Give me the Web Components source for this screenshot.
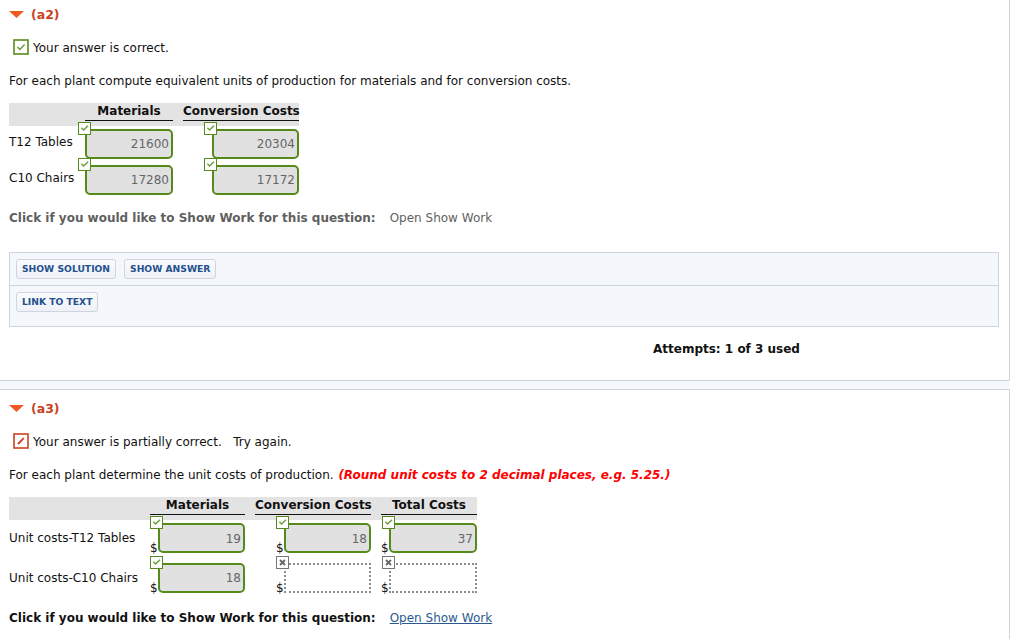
<!DOCTYPE html>
<html>
<head>
<meta charset="utf-8">
<title>Question</title>
<style>
  html, body { margin: 0; padding: 0; background: #fff; overflow: hidden; }
  body { height: 639px; font: 12px/18px "DejaVu Sans", Verdana, sans-serif; color: #111; }
</style>
</head>
<body>
<quiz-part label="(a2)" class="first">
  <answer-status kind="correct">Your answer is correct.</answer-status>
  <p-line>For each plant compute equivalent units of production for materials and for conversion costs.</p-line>
  <answer-grid columns="66px 88px 116px" rows="36px" style="--label-top:4px;--value-top:4px">
    <grid-head></grid-head><grid-head line>Materials</grid-head><grid-head line>Conversion Costs</grid-head>
    <row-label>T12 Tables</row-label><answer-cell value="21600"></answer-cell><answer-cell value="20304" wide></answer-cell>
    <row-label>C10 Chairs</row-label><answer-cell value="17280"></answer-cell><answer-cell value="17172" wide></answer-cell>
  </answer-grid>
  <show-work muted style="margin-top:8px"></show-work>
  <help-panel></help-panel>
  <attempts-line>Attempts: 1 of 3 used</attempts-line>
</quiz-part>
<part-gap></part-gap>
<quiz-part label="(a3)" class="second">
  <answer-status kind="partial">Your answer is partially correct.&nbsp;&nbsp; Try again.</answer-status>
  <p-line>For each plant determine the unit costs of production. <b>(Round unit costs to 2 decimal places, e.g. 5.25.)</b></p-line>
  <answer-grid columns="131px 95px 116px 96px" rows="40px" style="--label-top:6px;--value-top:5px">
    <grid-head></grid-head><grid-head line>Materials</grid-head><grid-head line>Conversion Costs</grid-head><grid-head line>Total Costs</grid-head>
    <row-label>Unit costs-T12 Tables</row-label><answer-cell dollar value="19"></answer-cell><answer-cell dollar wide value="18"></answer-cell><answer-cell dollar mark-left="1" value="37"></answer-cell>
    <row-label>Unit costs-C10 Chairs</row-label><answer-cell dollar value="18" style="--value-top:4px"></answer-cell><answer-cell dollar wide empty></answer-cell><answer-cell dollar mark-left="1" empty></answer-cell>
  </answer-grid>
  <show-work style="margin-top:6px"></show-work>
</quiz-part>

<script>
const CHECK = `<svg viewBox="0 0 13 13" width="13" height="13"><rect x=".5" y=".5" width="12" height="12" fill="#fff" stroke="#578a1c"/><path d="M3.4 5.8 5.6 8 10 3.8" fill="none" stroke="#6f9c3c" stroke-width="1.4"/></svg>`;
const CROSS = `<svg viewBox="0 0 13 13" width="13" height="13"><rect x=".5" y=".5" width="12" height="12" fill="#fff" stroke="#777"/><path d="M4 4 9 9M9 4 4 9" fill="none" stroke="#666" stroke-width="1.8"/></svg>`;

function simple(name, css, html = "<slot></slot>") {
  customElements.define(name, class extends HTMLElement {
    constructor() {
      super();
      this.attachShadow({ mode: "open" }).innerHTML = `<style>${css}</style>${html}`;
    }
  });
}

class QuizPart extends HTMLElement {
  connectedCallback() {
    this.attachShadow({ mode: "open" }).innerHTML = `
      <style>
        :host {
          display: block;
          box-sizing: border-box;
          width: 1010px;
          border: 1px solid #cdd5e3;
          border-left: 0;
          padding: 10px 0 0 9px;
        }
        :host(.first) { border-top: 0; height: 381px; padding-top: 6px; }
        :host(.second) { border-bottom: 0; height: 250px; }
        .head {
          display: flex;
          align-items: flex-start;
          gap: 7px;
          height: 16px;
          color: #c9421f;
          font-weight: bold;
          font-size: 12.5px;
        }
        svg { display: block; margin-top: 5px; }
      </style>
      <div class="head">
        <svg width="15" height="7" viewBox="0 0 15 7"><path d="M0 0H15L7.5 7Z" fill="#f05a22"/></svg>
        <span>${this.getAttribute("label")}</span>
      </div>
      <slot></slot>`;
  }
}
customElements.define("quiz-part", QuizPart);

simple("part-gap", `
  :host { display: block; width: 1009px; height: 8px; background: #f4f7fb; }
`);

class AnswerStatus extends HTMLElement {
  connectedCallback() {
    const ok = this.getAttribute("kind") === "correct";
    const icon = ok
      ? `<rect x="1" y="1" width="14" height="14" fill="#fff" stroke="#578a1c" stroke-width="1.6"/><path d="M4.4 8 6.9 10.4 11.6 5.6" fill="none" stroke="#6f9c3c" stroke-width="1.5"/>`
      : `<rect x="1" y="1" width="14" height="14" fill="#fff" stroke="#cc4125" stroke-width="1.6"/><path d="M5 11 10.8 5.2" fill="none" stroke="#cc4125" stroke-width="1.9"/>`;
    this.attachShadow({ mode: "open" }).innerHTML = `
      <style>
        :host { display: flex; align-items: flex-start; gap: 4px; margin: 17px 0 0 4px; height: 16px; white-space: nowrap; }
        svg { display: block; flex: none; }
      </style>
      <svg width="16" height="16" viewBox="0 0 16 16">${icon}</svg>
      <span><slot></slot></span>`;
  }
}
customElements.define("answer-status", AnswerStatus);

simple("p-line", `
  :host { display: block; margin-top: 18px; height: 16px; line-height: 16px; }
  ::slotted(b) { color: #f00; font-style: italic; margin-left: 1px; }
`);

class AnswerGrid extends HTMLElement {
  connectedCallback() {
    this.attachShadow({ mode: "open" }).innerHTML = `
      <style>
        :host { display: block; margin-top: 14px; }
        .grid {
          display: grid;
          width: max-content;
          grid-template-columns: ${this.getAttribute("columns")};
          column-gap: 10px;
          grid-template-rows: 26px;
          grid-auto-rows: ${this.getAttribute("rows")};
          background: linear-gradient(#e3e3e3, #e3e3e3) top / 100% 23px no-repeat;
        }
      </style>
      <div class="grid"><slot></slot></div>`;
  }
}
customElements.define("answer-grid", AnswerGrid);

class GridHead extends HTMLElement {
  connectedCallback() {
    const line = this.hasAttribute("line");
    this.attachShadow({ mode: "open" }).innerHTML = `
      <style>
        :host { display: block; text-align: center; font-weight: bold; white-space: nowrap; }
        span { display: block; height: 17px; line-height: 16px; ${line ? "border-bottom: 1px solid #111;" : ""} }
      </style>
      <span><slot></slot></span>`;
  }
}
customElements.define("grid-head", GridHead);

simple("row-label", `
  :host { display: block; padding-top: var(--label-top, 4px); white-space: nowrap; }
`);

class AnswerCell extends HTMLElement {
  connectedCallback() {
    const empty = this.hasAttribute("empty");
    const dollar = this.hasAttribute("dollar");
    const wide = this.hasAttribute("wide");
    const inset = wide ? (dollar ? 21 : 29) : 0;
    const markLeft = this.getAttribute("mark-left") || (wide ? 21 : (dollar ? 0 : -7));
    this.attachShadow({ mode: "open" }).innerHTML = `
      <style>
        :host { display: flex; align-items: flex-start; position: relative; height: 30px; padding-left: ${inset}px; }
        .dollar { width: 8px; flex: none; line-height: 14px; margin-top: 18px; overflow: hidden; color: #111; }
        .box {
          flex: 1;
          box-sizing: border-box;
          height: 30px;
          text-align: right;
          padding: var(--value-top, 4px) 2px 0 0;
          color: #666;
          ${empty
            ? "border: 2px dotted #8c8c8c; background: #fff;"
            : "border: 2px solid #578a1c; background: #e1e1e1; border-radius: 5px;"}
        }
        .mark { position: absolute; top: -7px; left: ${markLeft}px; width: 13px; height: 13px; }
        svg { display: block; }
      </style>
      ${dollar ? `<span class="dollar">$</span>` : ""}
      <div class="box">${this.getAttribute("value") || ""}</div>
      <div class="mark">${empty ? CROSS : CHECK}</div>`;
  }
}
customElements.define("answer-cell", AnswerCell);

class ShowWork extends HTMLElement {
  connectedCallback() {
    const muted = this.hasAttribute("muted");
    this.attachShadow({ mode: "open" }).innerHTML = `
      <style>
        :host { display: flex; gap: 14px; height: 16px; color: ${muted ? "#5f5f5f" : "#111"}; white-space: nowrap; }
        a { color: ${muted ? "#5f5f5f" : "#2a5a8f"}; text-decoration: ${muted ? "none" : "underline"}; }
      </style>
      <b>Click if you would like to Show Work for this question:</b>
      <a>Open Show Work</a>`;
  }
}
customElements.define("show-work", ShowWork);

class HelpPanel extends HTMLElement {
  connectedCallback() {
    this.attachShadow({ mode: "open" }).innerHTML = `
      <style>
        :host {
          display: block;
          box-sizing: border-box;
          width: 990px;
          height: 75px;
          margin-top: 27px;
          background: #f4f7fb;
          border: 1px solid #cdd5e3;
        }
        .row { display: flex; gap: 8px; height: 32px; padding: 6px 6px 0; box-sizing: border-box; }
        .row + .row { border-top: 1px solid #cdd5e3; height: 41px; }
      </style>
      <div class="row"><help-button>SHOW SOLUTION</help-button><help-button>SHOW ANSWER</help-button></div>
      <div class="row"><help-button>LINK TO TEXT</help-button></div>`;
  }
}
customElements.define("help-panel", HelpPanel);

simple("help-button", `
  :host {
    display: block;
    box-sizing: border-box;
    height: 20px;
    padding: 0 5px;
    border: 1px solid #cdd5e3;
    border-radius: 3px;
    background: linear-gradient(#fafbfd, #eef1f6);
    color: #24508f;
    font-weight: bold;
    font-size: 9.2px;
    line-height: 18px;
    white-space: nowrap;
  }
`);

simple("attempts-line", `
  :host { display: block; margin: 13px 0 0 644px; height: 16px; font-weight: bold; white-space: nowrap; }
`);
</script>
</body>
</html>
